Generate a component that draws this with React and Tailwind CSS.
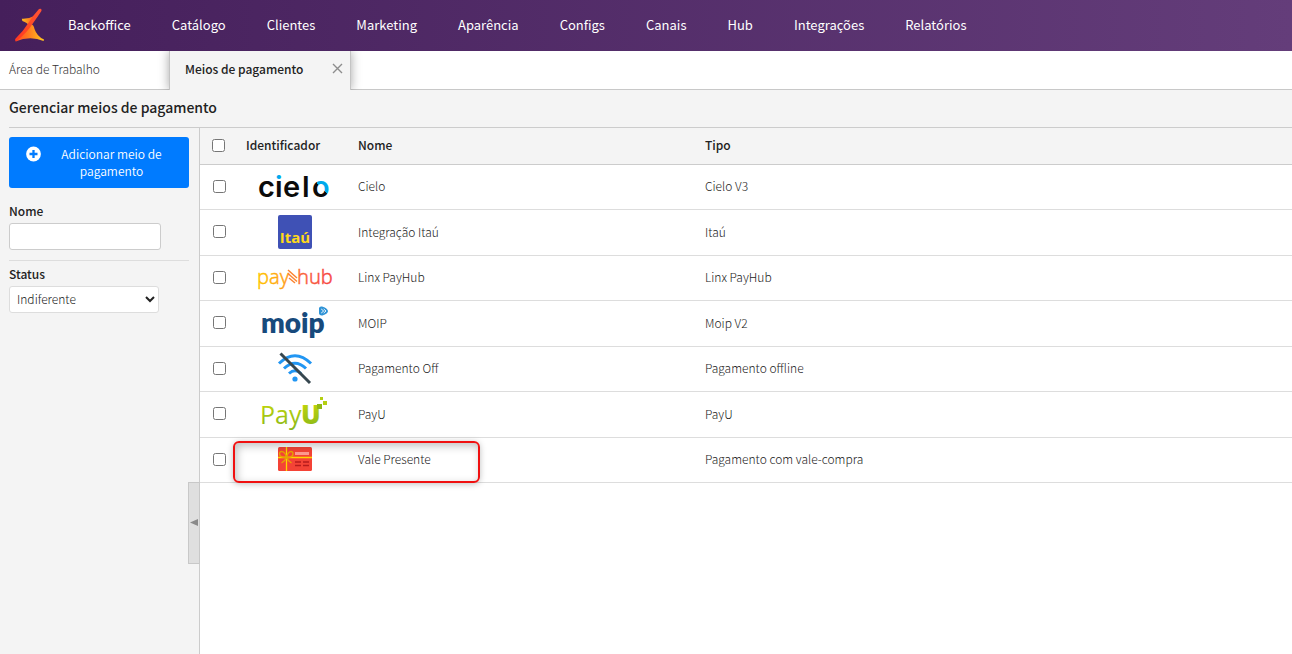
const menu = [
  'Backoffice',
  'Catálogo',
  'Clientes',
  'Marketing',
  'Aparência',
  'Configs',
  'Canais',
  'Hub',
  'Integrações',
  'Relatórios',
];

function BrandLogo() {
  return (
    <svg width="30" height="34" viewBox="0 0 30 34" aria-hidden="true">
      <defs>
        <linearGradient id="brand-a" x1="0" y1="0" x2="1" y2="0">
          <stop offset="0" stopColor="#ffc020" />
          <stop offset="1" stopColor="#ff5a1f" />
        </linearGradient>
        <linearGradient id="brand-b" x1="0" y1="0" x2="1" y2="0">
          <stop offset="0" stopColor="#ff4a22" />
          <stop offset="0.45" stopColor="#ff7a20" />
          <stop offset="1" stopColor="#ffc81e" />
        </linearGradient>
        <linearGradient id="brand-c" x1="0" y1="1" x2="1" y2="0">
          <stop offset="0" stopColor="#ff3524" />
          <stop offset="0.5" stopColor="#ff4a24" />
          <stop offset="1" stopColor="#ff5236" />
        </linearGradient>
      </defs>
      <path d="M6.800 10.800Q13.500 11.200 19 8L15 19Q12.500 14.500 7.400 13Z" fill="url(#brand-a)" />
      <path d="M0.500 33.500L14 16.500Q18.500 15 19.500 21Q22 28.500 29 31.500L28.600 33Q15 27.500 0.500 33.500Z" fill="url(#brand-b)" />
      <path d="M24 1Q27 -0.200 26.400 3Q22.500 9 18.500 14.500Q12 25 1 33.400Q-0.600 32.500 0.600 30.500Q8.500 23 13 15.500Q17.500 8 24 1Z" fill="url(#brand-c)" />
    </svg>
  );
}

function CieloLogo() {
  return (
    <svg width="76" height="42" viewBox="0 -4 76 42" role="img" aria-label="Cielo">
      <defs>
        <linearGradient id="cielo-i" gradientUnits="userSpaceOnUse" x1="0" y1="0" x2="0" y2="20">
          <stop offset="0.55" stopColor="#00a9ec" />
          <stop offset="0.55" stopColor="#0b0b0b" />
        </linearGradient>
        <linearGradient id="cielo-o" gradientUnits="userSpaceOnUse" x1="59" y1="27" x2="73" y2="14">
          <stop offset="0.5" stopColor="#0b0b0b" />
          <stop offset="0.5" stopColor="#00a9ec" />
        </linearGradient>
      </defs>
      <g fontFamily="Inter, sans-serif" fontSize="29" fontWeight="600">
        <text x="1" y="28" fill="#0b0b0b">c</text>
        <text x="18" y="28" fill="url(#cielo-i)">i</text>
        <text x="26" y="28" fill="#0b0b0b">e</text>
        <text x="45" y="28" fill="#0b0b0b">l</text>
        <text x="55" y="28" fill="url(#cielo-o)">o</text>
      </g>
    </svg>
  );
}

function ItauLogo() {
  return (
    <svg width="34" height="34" viewBox="0 0 34 34" role="img" aria-label="Itaú">
      <rect width="34" height="34" rx="2" fill="#3f51b5" />
      <text x="17" y="28" textAnchor="middle" fontFamily="Open Sans, sans-serif" fontSize="15" fontWeight="700" fill="#ffd91a">
        Itaú
      </text>
    </svg>
  );
}

function PayHubLogo() {
  return (
    <svg width="76" height="34" viewBox="0 0 76 34" role="img" aria-label="PayHub">
      <defs>
        <linearGradient id="payhub" gradientUnits="userSpaceOnUse" x1="0" y1="0" x2="76" y2="0">
          <stop offset="0" stopColor="#ffc400" />
          <stop offset="0.4" stopColor="#ff9a1c" />
          <stop offset="0.6" stopColor="#f9613a" />
          <stop offset="1" stopColor="#f5433f" />
        </linearGradient>
      </defs>
      <g fontFamily="Noto Sans, sans-serif" fontSize="20" fill="url(#payhub)" stroke="url(#payhub)" strokeWidth="0.400">
        <text x="0" y="24">pay</text>
        <text x="40" y="24">hub</text>
      </g>
      <path d="M31 10L40 18M31 13.500L40 21.500M32 18L38 23" stroke="#fb8430" strokeWidth="1.500" fill="none" />
    </svg>
  );
}

function MoipLogo() {
  return (
    <svg width="68" height="36" viewBox="0 0 68 36" role="img" aria-label="Moip">
      <text x="0" y="28" fontFamily="Lato, sans-serif" fontSize="28" fontWeight="800" fill="#174a7c">
        moip
      </text>
      <path d="M58 3Q58.500 1 61 1.500Q66 2.500 67 6Q67 8.500 61.500 10.500Q58.500 11 58 8.500Z" fill="#2f93d6" />
      <path d="M60.200 4L62.700 6L60.200 8M62.700 4L65 6L62.700 8" stroke="#fff" strokeWidth="0.900" fill="none" />
    </svg>
  );
}

function OfflineLogo() {
  return (
    <svg width="36" height="34" viewBox="0 0 36 34" role="img" aria-label="Pagamento offline">
      <g stroke="#2196f3" strokeWidth="3" fill="none">
        <path d="M2 12.500Q18 -3 34 12.500" />
        <path d="M7 17.500Q18 7 29 17.500" />
        <path d="M12 22.500Q18 17 24 22.500" />
      </g>
      <circle cx="18" cy="28" r="2.600" fill="#2196f3" />
      <path d="M3.500 2.500L33 32" stroke="#37474f" strokeWidth="3" />
    </svg>
  );
}

function PayULogo() {
  return (
    <svg width="68" height="36" viewBox="0 0 68 36" role="img" aria-label="PayU">
      <defs>
        <linearGradient id="payu" gradientUnits="userSpaceOnUse" x1="0" y1="8" x2="0" y2="36">
          <stop offset="0" stopColor="#bfd40a" />
          <stop offset="1" stopColor="#82b41c" />
        </linearGradient>
      </defs>
      <g fontFamily="Open Sans, sans-serif" fill="url(#payu)">
        <text x="-1" y="28" fontSize="25" fontWeight="500">Pay</text>
        <text x="40" y="28" fontSize="26" fontWeight="800">U</text>
      </g>
      <g fill="#b4cf12">
        <rect x="56" y="8" width="5" height="5" fill="#8fb816" />
        <rect x="62" y="5" width="4" height="4" />
        <rect x="59" y="1" width="3" height="3" />
      </g>
    </svg>
  );
}

function GiftCardLogo() {
  return (
    <svg width="34" height="24" viewBox="0 0 34 24" role="img" aria-label="Vale presente">
      <rect width="34" height="24" rx="1.500" fill="#f44336" />
      <path d="M8.500 0V24M0 10.500H34" stroke="#ffd600" strokeWidth="1.300" />
      <rect x="17" y="5" width="14" height="3" fill="#ff9a90" />
      <path d="M17 15H23M25 15H31M17 18.500H23M25 18.500H31" stroke="#b71c1c" strokeWidth="1.300" />
      <g stroke="#e7a400" strokeWidth="1.400" fill="none">
        <path d="M8.500 10.500C7 3.500 1.500 3 1.500 7C1.500 10 5 10.500 8.500 10.500C12 10.500 15 10 15 7C15 3 10 3.500 8.500 10.500Z" />
        <path d="M8.500 10.500Q7 14 3.500 16M8.500 10.500Q10 14 13.500 16" />
      </g>
    </svg>
  );
}

const payments = [
  { name: 'Cielo', type: 'Cielo V3', Logo: CieloLogo },
  { name: 'Integração Itaú', type: 'Itaú', Logo: ItauLogo },
  { name: 'Linx PayHub', type: 'Linx PayHub', Logo: PayHubLogo },
  { name: 'MOIP', type: 'Moip V2', Logo: MoipLogo },
  { name: 'Pagamento Off', type: 'Pagamento offline', Logo: OfflineLogo },
  { name: 'PayU', type: 'PayU', Logo: PayULogo },
  { name: 'Vale Presente', type: 'Pagamento com vale-compra', Logo: GiftCardLogo, highlighted: true },
];

function TopBar() {
  return (
    <header className="flex h-[51px] items-center bg-linear-to-r from-[#451f5b] to-[#643d7a] pb-px pl-[15px]">
      <a href="#inicio" aria-label="Início">
        <BrandLogo />
      </a>
      <nav className="ml-[23px] flex gap-[41px] text-[13px] leading-5 text-white">
        {menu.map((item) => (
          <a key={item} href="#menu">
            {item}
          </a>
        ))}
      </nav>
    </header>
  );
}

function TabBar() {
  return (
    <div className="flex h-[39px] overflow-hidden bg-white text-[12px] leading-5 shadow-[inset_0_-1px_0_#c8c8c8]">
      <a href="#area" className="w-[169px] pt-2 pl-[9px] font-light text-[#333]">
        Área de Trabalho
      </a>
      {/* The active tab covers the bar's bottom line */}
      <div className="flex w-[182px] justify-between border-x border-[#c4c4c4] bg-[#f4f4f4] pt-2 pr-[7px] pl-[15px] shadow-[0_0_10px_rgba(0,0,0,0.35)]">
        <span className="font-medium text-[#222]">Meios de pagamento</span>
        <button type="button" aria-label="Fechar aba" className="flex h-[18px] items-center">
          <svg width="11" height="11" viewBox="0 0 11 11" stroke="#8d8d8d" strokeWidth="1.400">
            <path d="M1 1L10 10M10 1L1 10" />
          </svg>
        </button>
      </div>
    </div>
  );
}

function Sidebar() {
  return (
    <aside className="relative w-[191px] shrink-0 border-r border-[#ccc] pt-[9px] pr-[10px] text-[12px]">
      <button
        type="button"
        className="flex w-full items-start gap-1.5 rounded-[3px] bg-[#007bff] pt-2 pr-[13px] pb-[9px] pl-[17px] leading-[17px] font-[350] text-white"
      >
        <svg width="15" height="17" viewBox="0 0 15 17" className="shrink-0">
          <circle cx="7.500" cy="9" r="7.400" fill="#fff" />
          <path d="M7.500 5V13M3.500 9H11.500" stroke="#007bff" strokeWidth="2.300" />
        </svg>
        <span className="flex-1">Adicionar meio de pagamento</span>
      </button>

      <div className="mt-[14px] border-b border-[#ddd] pb-[10px]">
        <label htmlFor="nome" className="mb-[3px] block leading-[18px] font-medium text-[#222]">
          Nome
        </label>
        <input id="nome" type="text" className="block h-[27px] w-[152px] rounded-[3px] border border-[#ccc] bg-white px-2" />
      </div>

      <div className="mt-1">
        <label htmlFor="status" className="mb-[3px] block leading-[18px] font-medium text-[#222]">
          Status
        </label>
        <select
          id="status"
          className="block h-[27px] w-[150px] rounded-[3px] border border-[#ddd] bg-white px-[3px] pb-0.5 font-light text-[#222]"
        >
          <option>Indiferente</option>
          <option>Ativo</option>
          <option>Inativo</option>
        </select>
      </div>

      {/* Collapse handle */}
      <button
        type="button"
        aria-label="Recolher filtros"
        className="absolute top-[354px] -right-px flex h-[82px] w-3 items-center justify-center border border-[#c8c8c8] bg-[#dfdfdf] pb-0.5"
      >
        <svg width="8" height="7" viewBox="0 0 8 7" fill="#8a8a8a">
          <path d="M0 3.500L8 0V7Z" />
        </svg>
      </button>
    </aside>
  );
}

function PaymentTable() {
  return (
    <table className="w-full table-fixed border-separate border-spacing-0 text-left text-[12px] leading-5">
      <thead>
        <tr className="h-[37px] bg-[#f4f4f4] text-[#222] *:border-b *:border-[#ccc] *:pb-0.5 *:font-medium">
          <th className="w-[38px] pl-3">
            <input type="checkbox" aria-label="Selecionar todos" className="block size-[13px]" />
          </th>
          <th className="w-[112px] pl-2">Identificador</th>
          <th className="w-[347px] pl-2">Nome</th>
          <th className="pl-2">Tipo</th>
        </tr>
      </thead>
      <tbody>
        {payments.map(({ name, type, Logo, highlighted }) => (
          <tr key={name} className="font-light text-[#222] odd:h-[45px] even:h-[46px] *:border-b *:border-[#ddd] *:pb-0.5">
            <td className="pl-[13px]">
              <input type="checkbox" aria-label={`Selecionar ${name}`} className="block size-[13px]" />
            </td>
            <td className="relative pl-0.5">
              <div className="flex justify-center">
                <Logo />
              </div>
              {highlighted && (
                <div className="pointer-events-none absolute top-[3px] -left-[5px] h-[42px] w-[247px] rounded-md border-2 border-[#f01010] shadow-[0_1px_6px_rgba(0,0,0,0.25),inset_2px_3px_8px_rgba(0,0,0,0.25)]" />
              )}
            </td>
            <td className="pl-2">{name}</td>
            <td className="pl-2">{type}</td>
          </tr>
        ))}
      </tbody>
    </table>
  );
}

export default function App() {
  return (
    <div className="flex min-h-screen flex-col bg-[#f4f4f4] font-['Noto_Sans_CJK_SC',sans-serif]">
      <TopBar />
      <TabBar />
      <main className="flex grow flex-col pl-[9px]">
        <h1 className="border-b border-[#ccc] pt-[7px] pb-[10px] text-[14px] leading-5 font-medium text-[#222]">
          Gerenciar meios de pagamento
        </h1>
        <div className="flex grow">
          <Sidebar />
          <section className="min-w-0 grow bg-white">
            <PaymentTable />
          </section>
        </div>
      </main>
    </div>
  );
}
